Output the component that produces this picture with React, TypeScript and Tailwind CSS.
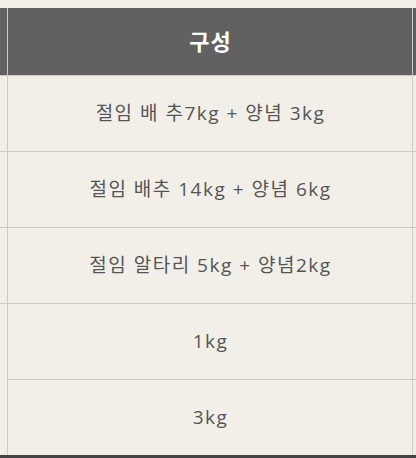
import React from "react";

const rows = [
  "절임 배 추7kg + 양념 3kg",
  "절임 배추 14kg + 양념 6kg",
  "절임 알타리 5kg + 양념2kg",
  "1kg",
  "3kg",
];

export default function App() {
  return (
    <div
      className="w-[416px] h-[458px] bg-[#f2efe9] pt-2 overflow-hidden"
      style={{ fontFamily: '"Open Sans", "Noto Sans CJK KR", sans-serif' }}
    >
      <div className="flex h-[68px] bg-[#616161] border-b border-[#cfcbc6]">
        <div className="w-[8px] border-r border-[#cfcbc6]" />
        <div className="w-[405px] border-r border-[#cfcbc6] flex items-center justify-center text-white text-[22px] font-bold tracking-[1px] pl-[1px]">
          구성
        </div>
        <div className="flex-1" />
      </div>
      <div className="border-b-[3px] border-[#444444]">
        {rows.map((text, i) => (
          <div key={i} className={`flex ${i < 4 ? "h-[76px]" : "h-[75px]"}`}>
            <div
              className={`w-[8px] border-r border-[#cfcbc6] ${
                i < 3 ? "border-b" : ""
              }`}
            />
            <div
              className={`w-[405px] border-r border-[#cfcbc6] flex items-center justify-center text-[19px] tracking-[1.5px] pl-[1px] text-[#555555] ${
                i < 4 ? "border-b" : ""
              }`}
            >
              {text}
            </div>
            <div
              className={`flex-1 border-[#cfcbc6] ${i < 4 ? "border-b" : ""}`}
            />
          </div>
        ))}
      </div>
    </div>
  );
}
